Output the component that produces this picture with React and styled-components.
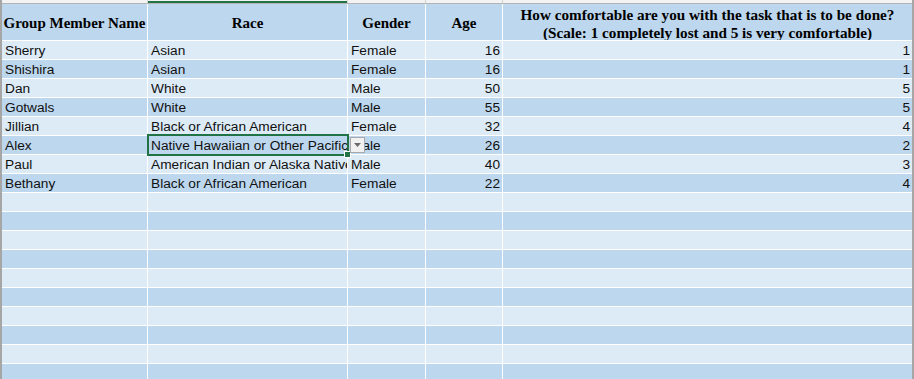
import React from 'react'
import styled, { createGlobalStyle } from 'styled-components'

const GlobalStyle = createGlobalStyle`
  html, body {
    margin: 0;
    padding: 0;
    background: #ffffff;
    overflow: hidden;
  }
`;

const COLS = '145px 199px 77px 76px 409px';

const people = [
  { name: 'Sherry', race: 'Asian', gender: 'Female', age: 16, score: 1 },
  { name: 'Shishira', race: 'Asian', gender: 'Female', age: 16, score: 1 },
  { name: 'Dan', race: 'White', gender: 'Male', age: 50, score: 5 },
  { name: 'Gotwals', race: 'White', gender: 'Male', age: 55, score: 5 },
  { name: 'Jillian', race: 'Black or African American', gender: 'Female', age: 32, score: 4 },
  { name: 'Alex', race: 'Native Hawaiian or Other Pacific Islander', gender: 'Male', age: 26, score: 2, selected: true },
  { name: 'Paul', race: 'American Indian or Alaska Native', gender: 'Male', age: 40, score: 3 },
  { name: 'Bethany', race: 'Black or African American', gender: 'Female', age: 22, score: 4 },
];

const EMPTY_ROWS = 11;

const Sheet = styled.div`
  width: 914px;
  height: 379px;
  overflow: hidden;
  box-sizing: border-box;
  border-left: 2px solid #a6a6a6;
  border-right: 2px solid #a6a6a6;
  background: #ffffff;
`;

const TopStrip = styled.div`
  display: grid;
  grid-template-columns: ${COLS};
  column-gap: 1px;
  height: 3px;
  background: #d4d4d4;
  border-bottom: 1px solid #b4b4b4;
`;

const StripCell = styled.div`
  background: #f3f3f3;
  box-shadow: ${p => (p.$active ? 'inset 0 -2px 0 #217346' : 'none')};
`;

const Grid = styled.div`
  display: grid;
  grid-template-columns: ${COLS};
  grid-template-rows: 36px;
  grid-auto-rows: 18px;
  gap: 1px;
  background: #ffffff;
`;

const HeadCell = styled.div`
  background: #bdd7ee;
  display: flex;
  flex-direction: column;
  align-items: center;
  justify-content: center;
  padding-top: 2px;
  box-sizing: border-box;
  font-family: "Liberation Serif", "Times New Roman", serif;
  font-weight: bold;
  font-size: 15px;
  line-height: 18px;
  color: #000000;
  white-space: nowrap;
  overflow: hidden;
`;

const QuestionCell = styled(HeadCell)`
  padding-top: 0;
  justify-content: flex-start;
  font-size: 15.2px;
  & > span:first-child {
    margin-top: 2px;
  }
`;

const Cell = styled.div`
  position: relative;
  background: ${p => (p.$shade ? '#bdd7ee' : '#ddebf7')};
  font-family: "Liberation Sans", Arial, sans-serif;
  font-size: 13.7px;
  line-height: 18px;
  color: #111111;
  white-space: nowrap;
  z-index: ${p => (p.$selected ? 2 : 0)};
`;

const CellText = styled.div`
  overflow: hidden;
  padding: 1px ${p => (p.$right ? '2px' : '0')} 0 ${p => (p.$right ? '0' : '3px')};
  height: 18px;
  box-sizing: border-box;
  text-align: ${p => (p.$right ? 'right' : 'left')};
`;

const SelectionBox = styled.div`
  position: absolute;
  left: -1px;
  top: -2px;
  right: -2px;
  bottom: -2px;
  border: 2px solid #217346;
  pointer-events: none;
`;

const FillHandle = styled.div`
  position: absolute;
  right: -4px;
  bottom: -4px;
  width: 5px;
  height: 5px;
  background: #217346;
  border: 1px solid #ffffff;
`;

const DropButton = styled.div`
  position: absolute;
  left: 202px;
  top: 1px;
  width: 15px;
  height: 16px;
  box-sizing: border-box;
  background: #f1f1f1;
  border: 1px solid #a9a9a9;
  display: flex;
  align-items: center;
  justify-content: center;
`;

const App = () => {
  const blanks = Array.from({ length: EMPTY_ROWS });
  return (
    <>
      <GlobalStyle />
      <Sheet>
        <TopStrip>
          <StripCell />
          <StripCell $active />
          <StripCell />
          <StripCell />
          <StripCell />
        </TopStrip>
        <Grid>
          <HeadCell>Group Member Name</HeadCell>
          <HeadCell>Race</HeadCell>
          <HeadCell>Gender</HeadCell>
          <HeadCell>Age</HeadCell>
          <QuestionCell>
            <span>How comfortable are you with the task that is to be done?</span>
            <span>(Scale: 1 completely lost and 5 is very comfortable)</span>
          </QuestionCell>

          {people.map((p, i) => {
            const shade = i % 2 === 1;
            return (
              <React.Fragment key={p.name}>
                <Cell $shade={shade}><CellText>{p.name}</CellText></Cell>
                <Cell $shade={shade} $selected={p.selected}>
                  <CellText>{p.race}</CellText>
                  {p.selected && (
                    <>
                      <SelectionBox />
                      <FillHandle />
                      <DropButton>
                        <svg width="7" height="4" viewBox="0 0 7 4">
                          <path d="M0 0 L7 0 L3.5 4 Z" fill="#6b6b6b" />
                        </svg>
                      </DropButton>
                    </>
                  )}
                </Cell>
                <Cell $shade={shade}><CellText>{p.gender}</CellText></Cell>
                <Cell $shade={shade}><CellText $right>{p.age}</CellText></Cell>
                <Cell $shade={shade}><CellText $right>{p.score}</CellText></Cell>
              </React.Fragment>
            );
          })}

          {blanks.map((_, i) => {
            const shade = (people.length + i) % 2 === 1;
            return (
              <React.Fragment key={'b' + i}>
                <Cell $shade={shade} />
                <Cell $shade={shade} />
                <Cell $shade={shade} />
                <Cell $shade={shade} />
                <Cell $shade={shade} />
              </React.Fragment>
            );
          })}
        </Grid>
      </Sheet>
    </>
  );
}

export default App;
